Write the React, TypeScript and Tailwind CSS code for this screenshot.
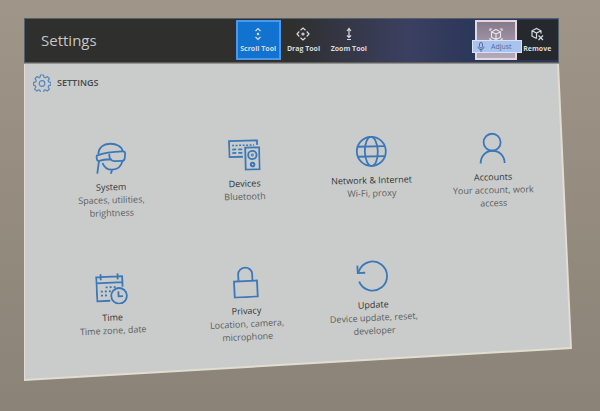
import React from "react";

type Tile = { title: string; text: string; icon: React.ReactNode };

const stroke = {
  fill: "none",
  stroke: "currentColor",
  strokeWidth: 1.8,
} as const;

function Icon({ children }: { children: React.ReactNode }) {
  return (
    <svg viewBox="0 0 32 32" className="size-8 text-[#3a78b9]" aria-hidden="true" {...stroke}>
      {children}
    </svg>
  );
}

const firstRow: Tile[] = [
  {
    title: "System",
    text: "Spaces, utilities, brightness",
    icon: (
      <Icon>
        <path d="M4 11.500C4.500 5 9.500 1.500 16 1.500S28 5 28.500 9.500" />
        <path d="M2.500 13C8 11 20 9.500 28.500 9.500c2 0 2.500 1 2.300 3l-.5 4c-.2 2-1.300 2.500-3 2.500h-7c-2 0-3-.5-4-2-5 0-9 .5-12.500 1.500-1.500.3-1.800-5-1.300-5.500z" />
        <path d="M15 11.500q-.5 3 1.300 5.500M4.500 18.500 2.500 31M8 20.500c1.500 4.500 5 7 9.500 7 6 0 9-2.500 10.500-8.500M17.500 27.500 16 31.500" />
      </Icon>
    ),
  },
  {
    title: "Devices",
    text: "Bluetooth",
    icon: (
      <Icon>
        <path d="M14.500 18H1V2h28v4.500" />
        <path d="M4 6.500h22" strokeWidth="1.500" strokeDasharray="2 1.500" />
        <path d="M4 10.500h4m2 0h4M4 14h4m2 0h4" strokeWidth="1.800" />
        <path d="M17 9h14v22H17z" />
        <circle cx="24" cy="16.500" r="4.200" />
        <circle cx="24" cy="16.500" r=".5" />
        <circle cx="24" cy="26" r="1.800" strokeWidth="2" />
      </Icon>
    ),
  },
  {
    title: "Network & Internet",
    text: "Wi-Fi, proxy",
    icon: (
      <Icon>
        <circle cx="16" cy="16" r="14.500" />
        <ellipse cx="16" cy="16" rx="6.500" ry="14.500" />
        <path d="M2.500 11h27M2.500 21h27" />
      </Icon>
    ),
  },
  {
    title: "Accounts",
    text: "Your account, work access",
    icon: (
      <Icon>
        <circle cx="16" cy="10" r="8.500" />
        <path d="M4 31c0-7 5-12.500 12-12.500S28 24 28 31" />
      </Icon>
    ),
  },
];

const secondRow: Tile[] = [
  {
    title: "Time",
    text: "Time zone, date",
    icon: (
      <Icon>
        <path d="M14 28H1V4h26v10.500M1 10h26M5.500 1v6M22.500 1v6" />
        <path d="M10 14.500h12M5 18.500h10M5 22.500h8" strokeWidth="1.800" strokeDasharray="2 2" />
        <circle cx="23" cy="23.500" r="7.800" />
        <path d="M22.500 19v5H27" />
      </Icon>
    ),
  },
  {
    title: "Privacy",
    text: "Location, camera, microphone",
    icon: (
      <Icon>
        <path d="M4.500 15h23v16h-23z" />
        <path d="M9 15V8a7 6.500 0 0 1 14 0v7" />
      </Icon>
    ),
  },
  {
    title: "Update",
    text: "Device update, reset, developer",
    icon: (
      <Icon>
        <path d="M2.500 21A14.500 14.500 0 1 0 3 10l-1 2" />
        <path d="M1.500 5v7.500H9" />
      </Icon>
    ),
  },
];

function TileRow({ tiles, className }: { tiles: Tile[]; className: string }) {
  return (
    <ul className={`grid origin-top-left ${className}`}>
      {tiles.map((tile) => (
        <li key={tile.title} className="flex justify-center">
          <a
            href={`#${tile.title}`}
            className="flex w-24 flex-col items-center text-center text-[9px] leading-[13px]"
          >
            {tile.icon}
            <span className="mt-[6px] whitespace-nowrap text-[#333637]">{tile.title}</span>
            <span className="text-[#5c6061]">{tile.text}</span>
          </a>
        </li>
      ))}
    </ul>
  );
}

function ToolIcon({ children }: { children: React.ReactNode }) {
  return (
    <svg
      viewBox="0 0 14 14"
      className="size-3.5"
      fill="none"
      stroke="currentColor"
      strokeWidth="1.200"
      aria-hidden="true"
    >
      {children}
    </svg>
  );
}

const toolClass =
  "flex h-full flex-col items-center justify-center gap-[3px] whitespace-nowrap text-[7px] leading-[9px] font-bold text-[#d9dadc]";

const cube = <path d="m7 1.500 4.500 2.300v5.400L7 11.500 2.500 9.200V3.800zM2.500 3.800 7 6l4.500-2.200M7 6v5.500" />;

export default function App() {
  return (
    <div className="min-h-screen bg-linear-to-b from-[#9f9588] to-[#8b8377] pt-[18px] pr-7 pb-7 pl-6 font-['Open_Sans','Noto_Sans',sans-serif]">
      <header className="mr-[13px] flex h-[45px] items-stretch border border-[#53606a] bg-linear-to-r from-[#2f2f2e] from-50% via-[#3b4062] via-72% to-[#2b3658] to-85%">
        <h1 className="flex flex-1 items-center pl-4 text-[15px] text-[#c5c6c5]">Settings</h1>
        <div className="flex flex-1 items-stretch pt-px pb-[2px]">
          <div className="-ml-16 grid w-[136px] grid-cols-3">
            <button className={`${toolClass} border-2 border-[#4a98ed] bg-[#1173cf]`}>
              <ToolIcon>
                <path d="M4.500 4 7 1.500 9.500 4M4.500 10 7 12.500 9.500 10" />
                <circle cx="7" cy="7" r=".7" />
              </ToolIcon>
              Scroll Tool
            </button>
            <button className={toolClass}>
              <ToolIcon>
                <path d="m4.500 3.300 2.500-2.300 2.500 2.300M4.500 10.700 7 13l2.500-2.300M3.300 4.500 1 7l2.300 2.500M10.700 4.500 13 7l-2.300 2.500" />
                <circle cx="7" cy="7" r="1" />
              </ToolIcon>
              Drag Tool
            </button>
            <button className={toolClass}>
              <ToolIcon>
                <path d="M7 2v8M5 4l2-2.500L9 4M5 8.500l2 2 2-2M5 12.500h4" />
              </ToolIcon>
              Zoom Tool
            </button>
          </div>
          <div className="ml-auto grid w-[83px] grid-cols-2 bg-[#25282d]">
            <div className="relative">
              <button
                aria-label="Adjust"
                className="flex h-full w-full justify-center border-2 border-[#e3d8e2] bg-linear-to-b from-[#85798a] to-[#b6aabd] pt-[6px] text-[#e8e3e8]"
              >
                <ToolIcon>
                  {cube}
                  <path d="M1 3V1h2M11 1h2v2M13 10v2h-2M3 12H1v-2" />
                </ToolIcon>
              </button>
              <div
                role="tooltip"
                className="absolute top-5 -left-[3px] z-10 flex h-[13px] w-[50px] items-center gap-[6px] border border-[#d5e3f7] bg-[#a9c3ee] pl-1 text-[7px] leading-[11px] text-[#536c9c]"
              >
                <svg
                  viewBox="0 0 8 10"
                  className="h-2.5 w-2"
                  fill="none"
                  stroke="currentColor"
                  aria-hidden="true"
                >
                  <rect x="2.500" y=".5" width="3" height="5.500" rx="1.500" />
                  <path d="M1 4.500c0 4 6 4 6 0M4 7.500V10" />
                </svg>
                Adjust
              </div>
            </div>
            <button className={toolClass}>
              <ToolIcon>
                <path d="M11 6.500V3.800L6.500 1.500 2 3.800v5.400l4.500 2.300M2 3.800 6.500 6 11 3.800M6.500 6v5.500" />
                <path d="m8.500 8.500 4.500 4.500M13 8.500 8.500 13" />
              </ToolIcon>
              Remove
            </button>
          </div>
        </div>
      </header>

      <div className="mt-px bg-[#e1ddd1] pr-[2px] pb-[2px] pl-px [clip-path:polygon(0_0,calc(100%-13px)_0,100%_calc(100%-32px),0_100%)]">
        <main className="bg-[#c9cccb] pt-[10px] pr-[17px] pb-[26px] pl-[18px] [clip-path:polygon(0_0,calc(100%-13px)_0,100%_calc(100%-32px),0_100%)]">
          <h2 className="-ml-[10px] flex items-center gap-[6px] text-[9px] leading-[18px] font-semibold text-[#45494a]">
            <svg
              viewBox="0 0 18 18"
              className="size-[18px] text-[#5488bd]"
              fill="none"
              stroke="currentColor"
              strokeWidth="1.200"
              strokeLinejoin="round"
              aria-hidden="true"
            >
              <path d="m7.500 1 3 0 .5 2.200 1.300.6 2-1.300 2.100 2.100-1.300 2 .6 1.300 2.200.5v2.800l-2.200.5-.6 1.300 1.300 2-2.100 2.100-2-1.300-1.300.6-.5 2.200-3 0-.5-2.200-1.300-.6-2 1.300-2.100-2.100 1.300-2-.6-1.300L.500 11.200V8.400l2.200-.5.6-1.300-1.300-2 2.100-2.100 2 1.300L7 3.200z" />
              <circle cx="9" cy="9.500" r="2.800" />
            </svg>
            SETTINGS
          </h2>
          <TileRow
            tiles={firstRow}
            className="mt-[52px] grid-cols-[134fr_133fr_121fr_122fr] -rotate-[1.5deg]"
          />
          <TileRow
            tiles={secondRow}
            className="mt-[55px] grid-cols-[135fr_133fr_121fr_121fr] -rotate-[2.8deg]"
          />
        </main>
      </div>
    </div>
  );
}
